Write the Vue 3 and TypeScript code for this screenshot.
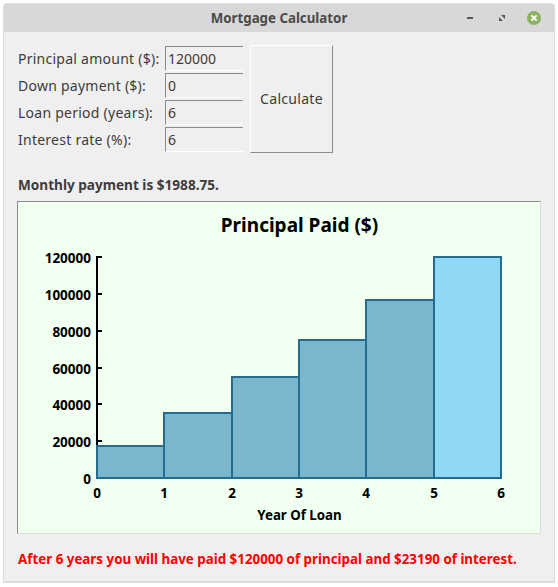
<script setup lang="ts">
const fields = [
  { label: 'Principal amount ($):', value: '120000' },
  { label: 'Down payment ($):', value: '0' },
  { label: 'Loan period (years):', value: '6' },
  { label: 'Interest rate (%):', value: '6' },
]
const baseY = 478
const scale = 221 / 120000
const xs = [97, 164, 232, 299, 366, 434, 501]
const amounts = [17400, 35300, 54900, 75000, 96800, 120000]
const bars = amounts.map((a, i) => ({
  x: xs[i],
  w: xs[i + 1] - xs[i],
  y: Math.round(baseY - a * scale),
  h: Math.round(a * scale),
  last: i === amounts.length - 1,
}))
const yTicks = [0, 20000, 40000, 60000, 80000, 100000, 120000].map((v) => ({
  v,
  y: Math.round(baseY - v * scale),
}))
</script>

<template>
  <div class="window">
    <header class="titlebar">
      <span class="title">Mortgage Calculator</span>
      <div class="controls">
        <svg class="ctl" width="16" height="16" viewBox="0 0 16 16">
          <rect x="5" y="7" width="6" height="2" fill="#555" />
        </svg>
        <svg class="ctl" width="16" height="16" viewBox="0 0 16 16">
          <path d="M7 5h4v4z M5 7l4 4H5z" fill="#555" />
        </svg>
        <svg class="ctl" width="16" height="16" viewBox="0 0 16 16">
          <circle cx="8" cy="8" r="7" fill="#8bb35f" />
          <path d="M5.4 5.4l5.2 5.2M10.6 5.4l-5.2 5.2" stroke="#fff" stroke-width="2" />
        </svg>
      </div>
    </header>

    <main class="body">
      <section class="form">
        <div class="fields">
          <div v-for="f in fields" :key="f.label" class="field">
            <label class="label">{{ f.label }}</label>
            <div class="input">{{ f.value }}</div>
          </div>
        </div>
        <button class="calc" type="button">Calculate</button>
      </section>

      <p class="monthly">Monthly payment is $1988.75.</p>

      <div class="chart">
        <svg width="524" height="332" viewBox="18 202 524 332" class="plot">
          <text x="299.5" y="232" text-anchor="middle" class="t-title">Principal Paid ($)</text>
          <g v-for="t in yTicks" :key="t.v">
            <rect x="96" :y="t.y - 1" width="6" height="2" fill="#000" />
            <text x="91" :y="t.y + 6" text-anchor="end" class="t-tick">{{ t.v }}</text>
          </g>
          <rect x="96" y="256" width="2" height="223" fill="#000" />
          <rect
            v-for="b in bars"
            :key="b.x"
            :x="b.x"
            :y="b.y"
            :width="b.w"
            :height="b.h"
            :fill="b.last ? '#90d9f4' : '#7ab6cc'"
            stroke="#256d8f"
            stroke-width="2"
          />
          <text v-for="(x, i) in xs" :key="x" :x="x" y="498" text-anchor="middle" class="t-tick">{{ i }}</text>
          <text x="299.5" y="520" text-anchor="middle" class="t-axis">Year Of Loan</text>
        </svg>
      </div>

      <p class="summary">After 6 years you will have paid $120000 of principal and $23190 of interest.</p>
    </main>
  </div>
</template>

<style>
html, body { background: #fff; margin: 0; }
</style>

<style scoped>
.window {
  box-sizing: border-box;
  width: 552px;
  height: 580px;
  margin: 3px 0 0 3px;
  border: 1px solid #dcdcdc;
  border-bottom-width: 2px;
  border-radius: 4px 4px 0 0;
  background: #efefef;
  font-family: "Noto Sans", sans-serif;
  color: #3c3c3c;
  display: flex;
  flex-direction: column;
  overflow: hidden;
}
.titlebar {
  height: 28px;
  flex: none;
  background: #d8d8d8;
  position: relative;
  display: flex;
  align-items: center;
  justify-content: center;
}
.title {
  font-size: 13.3px;
  font-weight: 700;
  color: #4a4a4a;
}
.controls {
  position: absolute;
  right: 12px;
  top: 6px;
  display: flex;
  gap: 16px;
}
.ctl { display: block; }
.body {
  flex: 1;
  padding: 13px 0 0 13px;
  display: flex;
  flex-direction: column;
}
.form {
  display: flex;
  gap: 7px;
}
.fields {
  display: flex;
  flex-direction: column;
  gap: 2px;
  padding-top: 1px;
}
.field {
  display: flex;
  align-items: center;
  height: 25px;
}
.label {
  width: 147px;
  padding-left: 1px;
  font-size: 14px;
  letter-spacing: 0.25px;
  white-space: nowrap;
}
.input {
  box-sizing: border-box;
  width: 78px;
  height: 25px;
  border-top: 1px solid #8c8c8c;
  border-left: 1px solid #8c8c8c;
  border-bottom: 1px solid #fff;
  padding: 0 0 0 2px;
  font-size: 14px;
  line-height: 24px;
}
.calc {
  box-sizing: border-box;
  width: 83px;
  height: 108px;
  background: #efefef;
  border: 1px solid;
  border-color: #fff #8c8c8c #8c8c8c #fff;
  font-family: inherit;
  font-size: 14px;
  letter-spacing: 0.3px;
  color: #3c3c3c;
  padding: 0 0 2px;
}
.monthly {
  margin: 22px 0 0 1px;
  font-size: 13.6px;
  font-weight: 700;
  line-height: 19px;
}
.chart {
  box-sizing: border-box;
  width: 524px;
  height: 333px;
  margin-top: 7px;
  background: #f0fff0;
  border: 1px solid;
  border-color: #8c8c8c #d8e0d8 #d8e0d8 #8c8c8c;
}
.plot { display: block; }
.t-title { font-size: 19px; font-weight: 700; fill: #000; }
.t-tick { font-size: 13.5px; font-weight: 700; fill: #000; }
.t-axis { font-size: 13.3px; font-weight: 700; fill: #000; }
.summary {
  margin: 16px 0 0 1px;
  font-size: 13.36px;
  font-weight: 700;
  color: #ff0000;
  line-height: 19px;
}
</style>
